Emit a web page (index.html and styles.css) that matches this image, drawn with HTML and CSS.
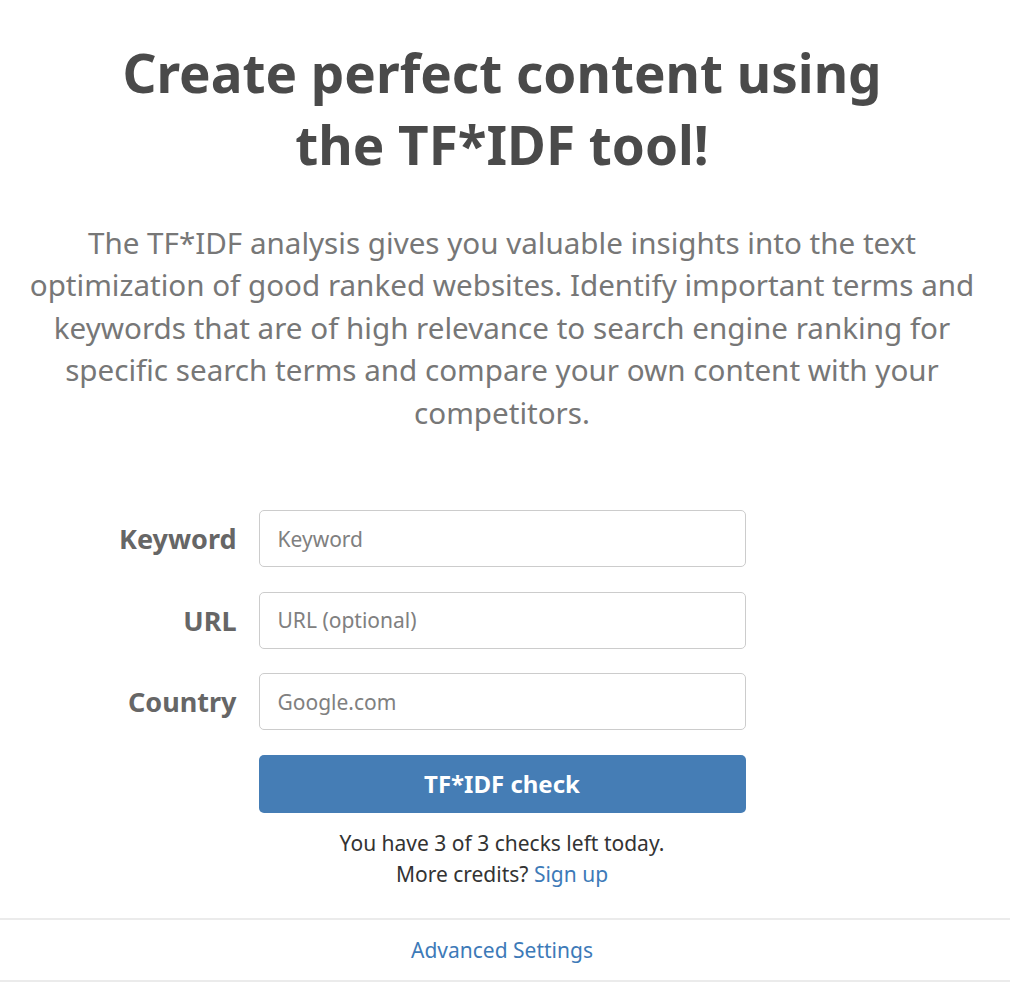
FILE: index.html
```html
<!DOCTYPE html>
<html lang="en">
<head>
<meta charset="utf-8">
<title>TF*IDF tool</title>
<link rel="stylesheet" href="styles.css">
</head>
<body>
<div class="page">
  <div class="main">
    <h1 class="title">Create perfect content using<br>the TF*IDF tool!</h1>
    <p class="lead">The TF*IDF analysis gives you valuable insights into the text optimization of good ranked websites. Identify important terms and keywords that are of high relevance to search engine ranking for specific search terms and compare your own content with your competitors.</p>
    <form class="form">
      <div class="row">
        <label class="label" for="kw">Keyword</label>
        <input class="field" id="kw" type="text" placeholder="Keyword">
      </div>
      <div class="row">
        <label class="label" for="url">URL</label>
        <input class="field" id="url" type="text" placeholder="URL (optional)">
      </div>
      <div class="row">
        <label class="label" for="country">Country</label>
        <input class="field" id="country" type="text" placeholder="Google.com">
      </div>
      <div class="row">
        <span class="label"></span>
        <button class="submit" type="button">TF*IDF check</button>
      </div>
    </form>
    <div class="quota">
      <div>You have 3 of 3 checks left today.</div>
      <div>More credits? <a class="link" href="#">Sign up</a></div>
    </div>
  </div>
  <div class="advanced">
    <a class="link" href="#">Advanced Settings</a>
  </div>
</div>
</body>
</html>
```
FILE: styles.css
```css
html, body {
  margin: 0;
  padding: 0;
  background: #ffffff;
}

body {
  font-family: "Noto Sans", "Open Sans", "Liberation Sans", sans-serif;
  color: #333333;
}

.page {
  width: 1010px;
}

.main {
  width: 1004px;
  padding-top: 37px;
}

.title {
  margin: 0;
  text-align: center;
  font-size: 53px;
  line-height: 72px;
  font-weight: 700;
  color: #4a4a4a;
}

.lead {
  margin: 41px 18px 0;
  text-align: center;
  font-size: 29.6px;
  line-height: 42.4px;
  color: #777777;
}

.form {
  margin-top: 76px;
}

.row {
  display: grid;
  grid-template-columns: 1fr 487px 1fr;
  align-items: center;
  margin-bottom: 24.5px;
}

.row:last-child {
  margin-bottom: 0;
}

.label {
  text-align: right;
  padding-right: 22px;
  font-size: 27px;
  font-weight: 700;
  color: #666666;
}

.field {
  box-sizing: border-box;
  height: 57px;
  width: 100%;
  margin: 0;
  padding: 0 18px;
  border: 1px solid #cccccc;
  border-radius: 5px;
  background: #ffffff;
  font-family: inherit;
  font-size: 21px;
  color: #555555;
  outline: none;
}

.field::placeholder {
  color: #808080;
}

.submit {
  box-sizing: border-box;
  height: 58px;
  width: 100%;
  margin: 0;
  border: none;
  border-radius: 5px;
  background: #457db5;
  color: #ffffff;
  font-family: inherit;
  font-size: 24px;
  font-weight: 700;
  cursor: pointer;
}

.quota {
  margin-top: 15px;
  text-align: center;
  font-size: 21px;
  line-height: 31px;
  color: #333333;
}

.link {
  color: #3d7ab8;
  text-decoration: none;
}

.advanced {
  margin-top: 28px;
  border-top: 2px solid #ebebeb;
  border-bottom: 2px solid #ebebeb;
  height: 60px;
  display: flex;
  align-items: center;
  justify-content: center;
  padding-right: 6px;
  font-size: 21px;
}
```
